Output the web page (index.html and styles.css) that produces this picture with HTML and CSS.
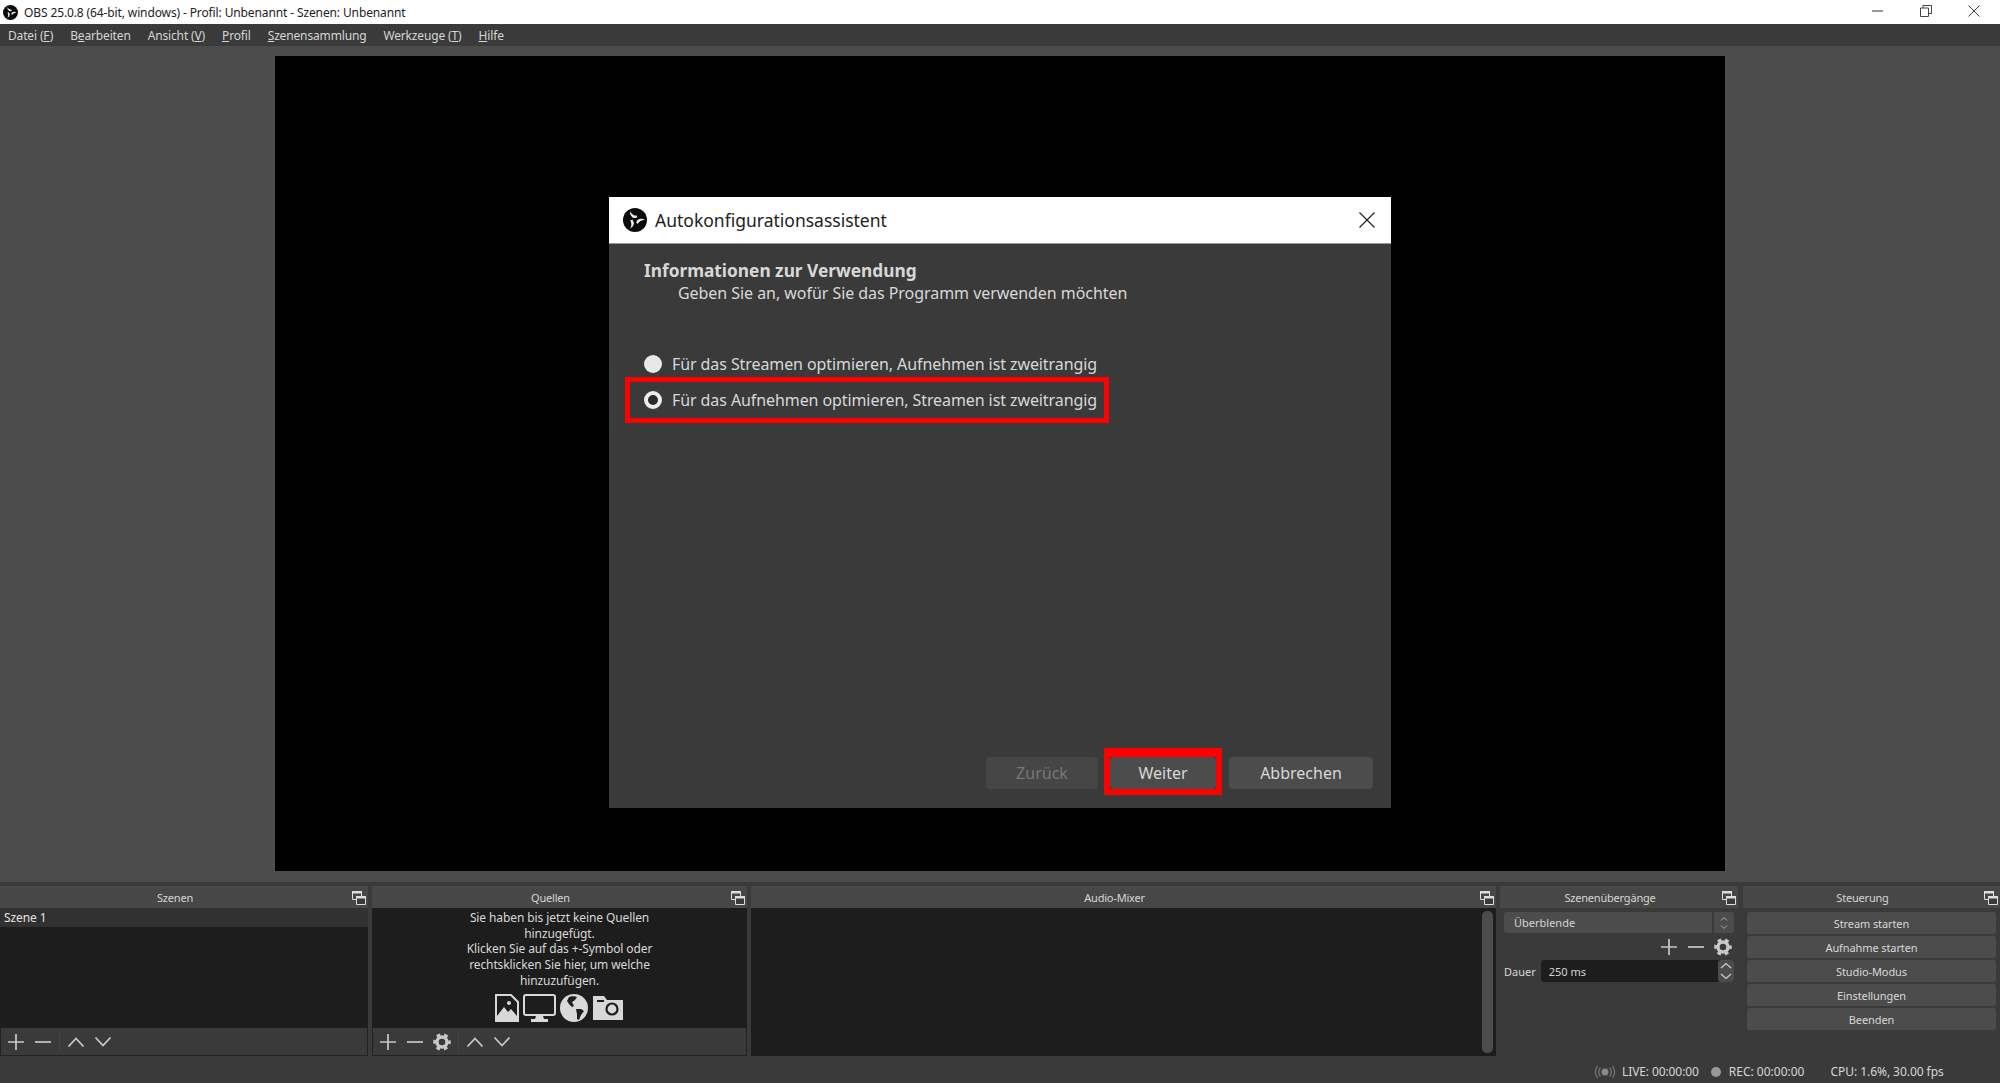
FILE: index.html
```html
<!DOCTYPE html>
<html lang="de">
<head>
    <meta charset="UTF-8">
    <title>OBS 25.0.8 (64-bit, windows) - Profil: Unbenannt - Szenen: Unbenannt</title>
    <link rel="stylesheet" href="styles.css">
</head>
<body>
    <svg class="defs" width="0" height="0">
        <symbol id="obs" viewBox="0 0 24 24">
            <circle cx="12" cy="12" r="12" fill="#0b0b0b"/>
            <g fill="#f0f0f0">
                <path d="M13.200 10.400C9.800 10.300 6.700 8 7 3.200C8.200 6 10.600 7.500 14.200 7.800Z"/>
                <path d="M13.200 10.400C9.800 10.300 6.700 8 7 3.200C8.200 6 10.600 7.500 14.200 7.800Z" transform="rotate(120 12 12)"/>
                <path d="M13.200 10.400C9.800 10.300 6.700 8 7 3.200C8.200 6 10.600 7.500 14.200 7.800Z" transform="rotate(240 12 12)"/>
            </g>
            <circle cx="12" cy="12" r="2.200" fill="#0b0b0b"/>
        </symbol>
        <symbol id="float" viewBox="0 0 14 14">
            <path d="M.5.500h9v8h-9z" fill="none" stroke="#ddd"/>
            <path d="M0 0h10v2.500H0z" fill="#ddd"/>
            <path d="M4.500 5.500h9v8h-9z" fill="#3a3a3a" stroke="#ddd"/>
            <path d="M4 5h10v2.500H4z" fill="#ddd"/>
        </symbol>
        <symbol id="plus" viewBox="0 0 18 18">
            <path d="M9 1v16M1 9h16" stroke="#c8c8c8" stroke-width="1.700" fill="none"/>
        </symbol>
        <symbol id="minus" viewBox="0 0 18 18">
            <path d="M1 9h16" stroke="#c8c8c8" stroke-width="1.700" fill="none"/>
        </symbol>
        <symbol id="up" viewBox="0 0 18 18">
            <path d="M1.500 13.500L9 5.500l7.500 8" stroke="#c8c8c8" stroke-width="1.800" fill="none"/>
        </symbol>
        <symbol id="down" viewBox="0 0 18 18">
            <path d="M1.500 4.500L9 12.500l7.500-8" stroke="#c8c8c8" stroke-width="1.800" fill="none"/>
        </symbol>
        <symbol id="gear" viewBox="0 0 18 18">
            <circle cx="9" cy="9" r="5" fill="none" stroke="#c8c8c8" stroke-width="3.400"/>
            <circle cx="9" cy="9" r="7.300" fill="none" stroke="#c8c8c8" stroke-width="3" stroke-dasharray="3.730 3.915" stroke-dashoffset="1.860"/>
        </symbol>
    </svg>

    <div class="app">
        <div class="titlebar">
            <svg class="titlebar-logo"><use href="#obs"/></svg>
            <span class="titlebar-text">OBS 25.0.8 (64-bit, windows) - Profil: Unbenannt - Szenen: Unbenannt</span>
            <div class="window-btns">
                <svg width="12" height="12" viewBox="0 0 12 12"><path d="M0 6h11" stroke="#555" stroke-width="1.200"/></svg>
                <svg width="12" height="12" viewBox="0 0 12 12"><path d="M.5 3h8v8.500h-8zM3 3V.5h8.500V8.500H8.500" fill="none" stroke="#444"/></svg>
                <svg width="12" height="12" viewBox="0 0 12 12"><path d="M.5.500l11 11M11.500.500l-11 11" stroke="#444"/></svg>
            </div>
        </div>

        <div class="menubar">
            <span>Datei (<u>F</u>)</span>
            <span>B<u>e</u>arbeiten</span>
            <span>Ansicht (<u>V</u>)</span>
            <span><u>P</u>rofil</span>
            <span><u>S</u>zenensammlung</span>
            <span>Werkzeuge (<u>T</u>)</span>
            <span><u>H</u>ilfe</span>
        </div>

        <div class="preview-area">
            <div class="preview">
                <div class="dialog">
                    <div class="dialog-title">
                        <svg class="dialog-logo"><use href="#obs"/></svg>
                        <span>Autokonfigurationsassistent</span>
                        <svg class="dialog-close" width="16" height="16" viewBox="0 0 16 16"><path d="M.5.500l15 15M15.500.500l-15 15" stroke="#222" stroke-width="1.200"/></svg>
                    </div>
                    <div class="dialog-body">
                        <h2>Informationen zur Verwendung</h2>
                        <p class="dialog-sub">Geben Sie an, wofür Sie das Programm verwenden möchten</p>
                        <div class="options">
                            <label class="option"><span class="radio"></span>Für das Streamen optimieren, Aufnehmen ist zweitrangig</label>
                            <label class="option option-marked"><span class="radio radio-checked"></span>Für das Aufnehmen optimieren, Streamen ist zweitrangig</label>
                        </div>
                        <div class="dialog-btns">
                            <button class="btn btn-back">Zurück</button>
                            <div class="mark"><button class="btn btn-next">Weiter</button></div>
                            <button class="btn btn-cancel">Abbrechen</button>
                        </div>
                    </div>
                </div>
            </div>
        </div>

        <div class="docks">
            <section class="dock dock-scenes">
                <header class="dock-head">Szenen<svg class="float"><use href="#float"/></svg></header>
                <div class="list">
                    <div class="list-row">Szene 1</div>
                </div>
                <div class="toolbar">
                    <svg class="tool"><use href="#plus"/></svg>
                    <svg class="tool"><use href="#minus"/></svg>
                    <i class="tool-sep"></i>
                    <svg class="tool"><use href="#up"/></svg>
                    <svg class="tool"><use href="#down"/></svg>
                </div>
            </section>

            <section class="dock dock-sources">
                <header class="dock-head">Quellen<svg class="float"><use href="#float"/></svg></header>
                <div class="list list-empty">
                    <p>Sie haben bis jetzt keine Quellen hinzugefügt.<br>Klicken Sie auf das +-Symbol oder rechtsklicken Sie hier, um welche hinzuzufügen.</p>
                    <div class="empty-icons">
                        <svg width="24" height="28" viewBox="0 0 24 28">
                            <path d="M1 1h15l7 7v19H1z" fill="none" stroke="#d8d8d8" stroke-width="2"/>
                            <path d="M2 26v-4l7-9 4 5 3-3 6 7v4z" fill="#d8d8d8"/>
                            <circle cx="14" cy="9" r="2" fill="#d8d8d8"/>
                        </svg>
                        <svg width="33" height="28" viewBox="0 0 33 28">
                            <rect x="1" y="1" width="31" height="20" rx="2" fill="none" stroke="#d8d8d8" stroke-width="2"/>
                            <path d="M13 22h7l1 3h4v3H8v-3h4z" fill="#d8d8d8"/>
                        </svg>
                        <svg width="28" height="28" viewBox="0 0 28 28">
                            <circle cx="14" cy="14" r="14" fill="#d8d8d8"/>
                            <path d="M9 3C11 2 15 2 17 3L15 6 12 8 14 12 12 13 9 10 7 7ZM16 15L21 15 24 17 21 21 19 26 17 25 17 20Z" fill="#1d1d1d"/>
                        </svg>
                        <svg width="32" height="26" viewBox="0 0 32 26">
                            <path d="M1 25V1h11l3 4h16v20z" fill="#d8d8d8"/>
                            <path d="M5 6h7" stroke="#1d1d1d" stroke-width="2"/>
                            <circle cx="20" cy="14" r="5.500" fill="none" stroke="#1d1d1d" stroke-width="2.200"/>
                        </svg>
                    </div>
                </div>
                <div class="toolbar">
                    <svg class="tool"><use href="#plus"/></svg>
                    <svg class="tool"><use href="#minus"/></svg>
                    <svg class="tool"><use href="#gear"/></svg>
                    <i class="tool-sep"></i>
                    <svg class="tool"><use href="#up"/></svg>
                    <svg class="tool"><use href="#down"/></svg>
                </div>
            </section>

            <section class="dock dock-mixer">
                <header class="dock-head">Audio-Mixer<svg class="float"><use href="#float"/></svg></header>
                <div class="mixer-body">
                    <div class="scrollbar"></div>
                </div>
            </section>

            <section class="dock dock-trans">
                <header class="dock-head">Szenenübergänge<svg class="float"><use href="#float"/></svg></header>
                <div class="trans-body">
                    <div class="combo">
                        <span class="combo-text">Überblende</span>
                        <span class="combo-arrows">
                            <svg width="8" height="14" viewBox="0 0 8 14"><path d="M1 4.500L4 1.500l3 3M1 9.500l3 3 3-3" fill="none" stroke="#aaa"/></svg>
                        </span>
                    </div>
                    <div class="trans-tools">
                        <svg class="tool"><use href="#plus"/></svg>
                        <svg class="tool"><use href="#minus"/></svg>
                        <svg class="tool"><use href="#gear"/></svg>
                    </div>
                    <div class="duration">
                        <span>Dauer</span>
                        <div class="spin">
                            <span class="spin-text">250 ms</span>
                            <span class="spin-btns">
                                <svg width="12" height="7" viewBox="0 0 12 7"><path d="M1 6l5-4.500L11 6" fill="none" stroke="#ccc" stroke-width="1.300"/></svg>
                                <svg width="12" height="7" viewBox="0 0 12 7"><path d="M1 1l5 4.500L11 1" fill="none" stroke="#ccc" stroke-width="1.300"/></svg>
                            </span>
                        </div>
                    </div>
                </div>
            </section>

            <section class="dock dock-controls">
                <header class="dock-head">Steuerung<svg class="float"><use href="#float"/></svg></header>
                <div class="controls-body">
                    <button class="ctrl">Stream starten</button>
                    <button class="ctrl">Aufnahme starten</button>
                    <button class="ctrl">Studio-Modus</button>
                    <button class="ctrl">Einstellungen</button>
                    <button class="ctrl">Beenden</button>
                </div>
            </section>
        </div>

        <div class="statusbar">
            <svg class="live-icon" width="22" height="14" viewBox="0 0 22 14">
                <circle cx="11" cy="7" r="3.500" fill="#8a8a8a"/>
                <g fill="none" stroke="#777" stroke-width="1.200">
                    <path d="M6.500 2.500a6.500 6.500 0 0 0 0 9M15.500 2.500a6.500 6.500 0 0 1 0 9"/>
                    <path d="M3.500 1a9.500 9.500 0 0 0 0 12M18.500 1a9.500 9.500 0 0 1 0 12"/>
                </g>
            </svg>
            <span class="status-live">LIVE: 00:00:00</span>
            <i class="rec-dot"></i>
            <span class="status-rec">REC: 00:00:00</span>
            <span class="status-cpu">CPU: 1.6%, 30.00 fps</span>
        </div>
    </div>
</body>
</html>
```

FILE: styles.css
```css
body {
    margin: 0;
    font-family: "Noto Sans", "Open Sans", sans-serif;
    font-size: 12px;
    color: #d6d6d6;
    background-color: #3a3a3a;
    overflow: hidden;
}
.defs {
    position: absolute;
}
.app {
    width: 2000px;
    height: 1083px;
    display: flex;
    flex-direction: column;
}

/* window chrome */
.titlebar {
    height: 24px;
    flex: none;
    background-color: #fff;
    color: #222;
    display: flex;
    align-items: center;
    padding-left: 3px;
}
.titlebar-logo {
    width: 15px;
    height: 15px;
}
.titlebar-text {
    margin-left: 6px;
    font-size: 12px;
    letter-spacing: -0.12px;
}
.window-btns {
    margin-left: auto;
    display: flex;
    gap: 36px;
    padding: 0 20px 2px 0;
}
.menubar {
    height: 22px;
    flex: none;
    background-color: #3a3a3a;
    display: flex;
    align-items: center;
    gap: 17px;
    padding-left: 8px;
    letter-spacing: -0.15px;
}

/* preview */
.preview-area {
    height: 836px;
    flex: none;
    box-sizing: border-box;
    background-color: #4c4c4c;
    padding: 10px 275px 11px 275px;
}
.preview {
    height: 100%;
    box-sizing: border-box;
    background-color: #000;
    padding: 141px 334px 63px 334px;
}
.dialog {
    height: 100%;
    background-color: #3a3a3a;
    display: flex;
    flex-direction: column;
}
.dialog-title {
    height: 47px;
    flex: none;
    box-sizing: border-box;
    background-color: #fff;
    border-bottom: 1px solid #999;
    color: #222;
    display: flex;
    align-items: center;
    padding: 0 16px 0 14px;
    font-size: 17.500px;
}
.dialog-logo {
    width: 24px;
    height: 24px;
    margin-right: 8px;
}
.dialog-close {
    margin-left: auto;
}
.dialog-body {
    flex: 1;
    display: flex;
    flex-direction: column;
    padding: 16px 18px 13px 35px;
    font-size: 16px;
    color: #d8d8d8;
}
.dialog-body h2 {
    margin: 0;
    font-size: 17.300px;
    line-height: 22px;
    font-weight: 700;
}
.dialog-sub {
    margin: 0 0 0 34px;
    line-height: 22px;
    letter-spacing: -0.05px;
}
.options {
    margin: 42px 0 0 -19px;
    display: flex;
    flex-direction: column;
}
.option {
    display: flex;
    align-items: center;
    align-self: flex-start;
    height: 36px;
    box-sizing: border-box;
    padding: 0 7px 0 14px;
    border: 5px solid transparent;
    letter-spacing: -0.09px;
}
.option-marked {
    height: 46px;
    margin-top: -5px;
    border-color: #f00;
}
.radio {
    width: 18px;
    height: 18px;
    flex: none;
    border-radius: 50%;
    background-color: #e8e8e8;
    margin-right: 10px;
    box-sizing: border-box;
}
.radio-checked {
    background-color: #2a2a2a;
    border: 4px solid #eee;
}
.dialog-btns {
    margin-top: auto;
    display: flex;
    align-items: flex-end;
    justify-content: flex-end;
}
.btn {
    height: 32px;
    border: 0;
    border-radius: 4px;
    background-color: #4c4c4c;
    color: #d8d8d8;
    font: inherit;
    padding: 0;
}
.btn-back {
    width: 112px;
    margin-bottom: 6px;
    background-color: #464646;
    color: #777;
}
.btn-next {
    display: block;
    width: 106px;
}
.btn-cancel {
    width: 144px;
    margin-bottom: 6px;
}
.mark {
    margin: 0 7px 0 6px;
    border: 6px solid #f00;
    border-width: 9px 6px 6px;
}

/* docks */
.docks {
    flex: 1;
    display: flex;
    gap: 4px;
    padding-top: 4px;
}
.dock {
    display: flex;
    flex-direction: column;
    flex: none;
}
.dock-scenes { width: 368px; }
.dock-sources { width: 375px; }
.dock-mixer { width: 745px; }
.dock-trans { width: 238px; }
.dock-controls { width: 257px; margin-left: 1px; }
.dock-head {
    height: 22px;
    flex: none;
    box-sizing: border-box;
    background-color: #474747;
    display: flex;
    align-items: center;
    justify-content: center;
    position: relative;
    padding-right: 18px;
    font-size: 11px;
    letter-spacing: -0.2px;
}
.float {
    position: absolute;
    right: 2px;
    top: 5px;
    width: 14px;
    height: 14px;
}
.list {
    flex: 1;
    background-color: #1d1d1d;
}
.list-row {
    height: 19px;
    background-color: #313131;
    line-height: 19px;
    padding-left: 4px;
    color: #e4e4e4;
    letter-spacing: -0.1px;
}
.list-empty {
    text-align: center;
    color: #d8d8d8;
    padding: 2px 22px 0;
    display: flex;
    flex-direction: column;
    align-items: center;
}
.list-empty p {
    margin: 0;
    line-height: 15.700px;
    width: 240px;
    letter-spacing: -0.1px;
}
.empty-icons {
    display: flex;
    align-items: center;
    gap: 4px;
    margin-top: 5px;
}
.toolbar {
    height: 28px;
    flex: none;
    box-sizing: border-box;
    background-color: #3a3a3a;
    border: 1px solid #222;
    border-top: 0;
    display: flex;
    align-items: center;
    gap: 9px;
    padding-left: 6px;
}
.tool {
    width: 18px;
    height: 18px;
    flex: none;
}
.tool-sep {
    width: 1px;
    height: 20px;
    background-color: #444;
    margin: 0 -2px;
}
.mixer-body {
    flex: 1;
    background-color: #1d1d1d;
    display: flex;
    justify-content: flex-end;
    padding: 3px 3px 3px 0;
}
.scrollbar {
    width: 11px;
    background-color: #4c4c4c;
    border-radius: 5px;
}
.trans-body {
    flex: 1;
    padding: 4px 4px 0;
    font-size: 11px;
}
.combo {
    height: 21px;
    display: flex;
    gap: 2px;
}
.combo-text {
    flex: 1;
    background-color: #4c4c4c;
    border-radius: 3px 0 0 3px;
    padding-left: 10px;
    line-height: 21px;
}
.combo-arrows {
    width: 20px;
    background-color: #4c4c4c;
    border-radius: 0 3px 3px 0;
    display: flex;
    align-items: center;
    justify-content: center;
}
.trans-tools {
    height: 27px;
    display: flex;
    align-items: center;
    justify-content: flex-end;
    gap: 9px;
    padding-right: 2px;
}
.duration {
    display: flex;
    align-items: center;
    gap: 5px;
}
.spin {
    flex: 1;
    height: 22px;
    background-color: #1d1d1d;
    border-radius: 3px;
    display: flex;
    align-items: center;
    justify-content: space-between;
}
.spin-text {
    padding-left: 8px;
}
.spin-btns {
    width: 16px;
    height: 22px;
    background-color: #4c4c4c;
    border-radius: 3px;
    display: flex;
    flex-direction: column;
    align-items: center;
    justify-content: space-around;
}
.controls-body {
    flex: 1;
    display: flex;
    flex-direction: column;
    gap: 2px;
    padding: 4px 4px 0;
}
.ctrl {
    height: 22px;
    border: 0;
    border-radius: 3px;
    background-color: #4c4c4c;
    color: #d8d8d8;
    font: inherit;
    font-size: 11px;
    letter-spacing: -0.1px;
    padding: 0;
}

/* status bar */
.statusbar {
    height: 27px;
    flex: none;
    display: flex;
    align-items: center;
    padding-left: 1594px;
    padding-top: 4px;
    box-sizing: border-box;
    font-size: 12px;
}
.live-icon {
    margin-right: 6px;
}
.status-live {
    letter-spacing: -0.1px;
}
.rec-dot {
    width: 10px;
    height: 10px;
    border-radius: 50%;
    background-color: #999;
    margin: 0 8px 0 12px;
}
.status-cpu {
    margin-left: 26px;
    letter-spacing: -0.05px;
}
```
